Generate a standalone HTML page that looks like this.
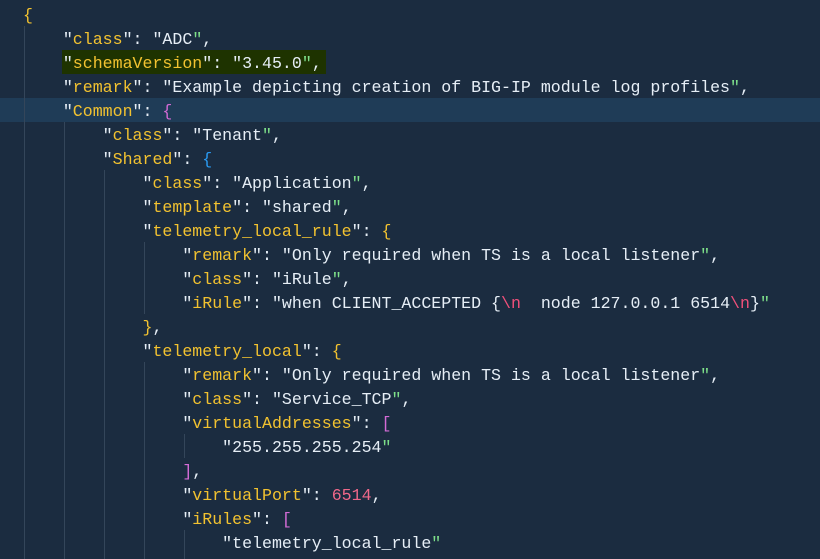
<!DOCTYPE html>
<html><head><meta charset="utf-8"><style>
html,body{margin:0;padding:0;width:820px;height:559px;overflow:hidden;background:#1b2c40;}
#c{position:relative;width:820px;height:559px;font-family:"Liberation Mono",monospace;font-size:16.6px;color:#e6eef6;}
.l{position:absolute;left:23px;height:24px;line-height:24px;white-space:pre;margin-top:2px;}
.k{color:#f2c230}.s{color:#e6eef6}.g{color:#7ee08a}.y{color:#f2c230}.p{color:#d36bd6}.b{color:#2a9cf5}.n{color:#f0688a}.e{color:#f0507a}
.gd{position:absolute;width:1px;background:#34465a;}
</style></head><body><div id="c">
<div style="position:absolute;left:0;top:98px;width:820px;height:24px;background:#1f3c57;"></div>
<div style="position:absolute;left:62px;top:50px;width:264px;height:24px;background:#1e3300;"></div>
<div class="gd" style="left:24px;top:26px;height:533px"></div>
<div class="gd" style="left:64px;top:122px;height:437px"></div>
<div class="gd" style="left:104px;top:170px;height:389px"></div>
<div class="gd" style="left:144px;top:242px;height:72px"></div>
<div class="gd" style="left:144px;top:362px;height:197px"></div>
<div class="gd" style="left:184px;top:434px;height:24px"></div>
<div class="gd" style="left:184px;top:530px;height:29px"></div>
<div class="l" style="top:2px"><span class="y">{</span></div>
<div class="l" style="top:26px">    "<span class="k">class</span>": "ADC<span class="g">"</span>,</div>
<div class="l" style="top:50px">    "<span class="k">schemaVersion</span>": "3.45.0<span class="g">"</span>,</div>
<div class="l" style="top:74px">    "<span class="k">remark</span>": "Example depicting creation of BIG-IP module log profiles<span class="g">"</span>,</div>
<div class="l" style="top:98px">    "<span class="k">Common</span>": <span class="p">{</span></div>
<div class="l" style="top:122px">        "<span class="k">class</span>": "Tenant<span class="g">"</span>,</div>
<div class="l" style="top:146px">        "<span class="k">Shared</span>": <span class="b">{</span></div>
<div class="l" style="top:170px">            "<span class="k">class</span>": "Application<span class="g">"</span>,</div>
<div class="l" style="top:194px">            "<span class="k">template</span>": "shared<span class="g">"</span>,</div>
<div class="l" style="top:218px">            "<span class="k">telemetry_local_rule</span>": <span class="y">{</span></div>
<div class="l" style="top:242px">                "<span class="k">remark</span>": "Only required when TS is a local listener<span class="g">"</span>,</div>
<div class="l" style="top:266px">                "<span class="k">class</span>": "iRule<span class="g">"</span>,</div>
<div class="l" style="top:290px">                "<span class="k">iRule</span>": "when CLIENT_ACCEPTED {<span class="e">\n</span>  node 127.0.0.1 6514<span class="e">\n</span>}<span class="g">"</span></div>
<div class="l" style="top:314px">            <span class="y">}</span>,</div>
<div class="l" style="top:338px">            "<span class="k">telemetry_local</span>": <span class="y">{</span></div>
<div class="l" style="top:362px">                "<span class="k">remark</span>": "Only required when TS is a local listener<span class="g">"</span>,</div>
<div class="l" style="top:386px">                "<span class="k">class</span>": "Service_TCP<span class="g">"</span>,</div>
<div class="l" style="top:410px">                "<span class="k">virtualAddresses</span>": <span class="p">[</span></div>
<div class="l" style="top:434px">                    "255.255.255.254<span class="g">"</span></div>
<div class="l" style="top:458px">                <span class="p">]</span>,</div>
<div class="l" style="top:482px">                "<span class="k">virtualPort</span>": <span class="n">6514</span>,</div>
<div class="l" style="top:506px">                "<span class="k">iRules</span>": <span class="p">[</span></div>
<div class="l" style="top:530px">                    "telemetry_local_rule<span class="g">"</span></div>
</div></body></html>
